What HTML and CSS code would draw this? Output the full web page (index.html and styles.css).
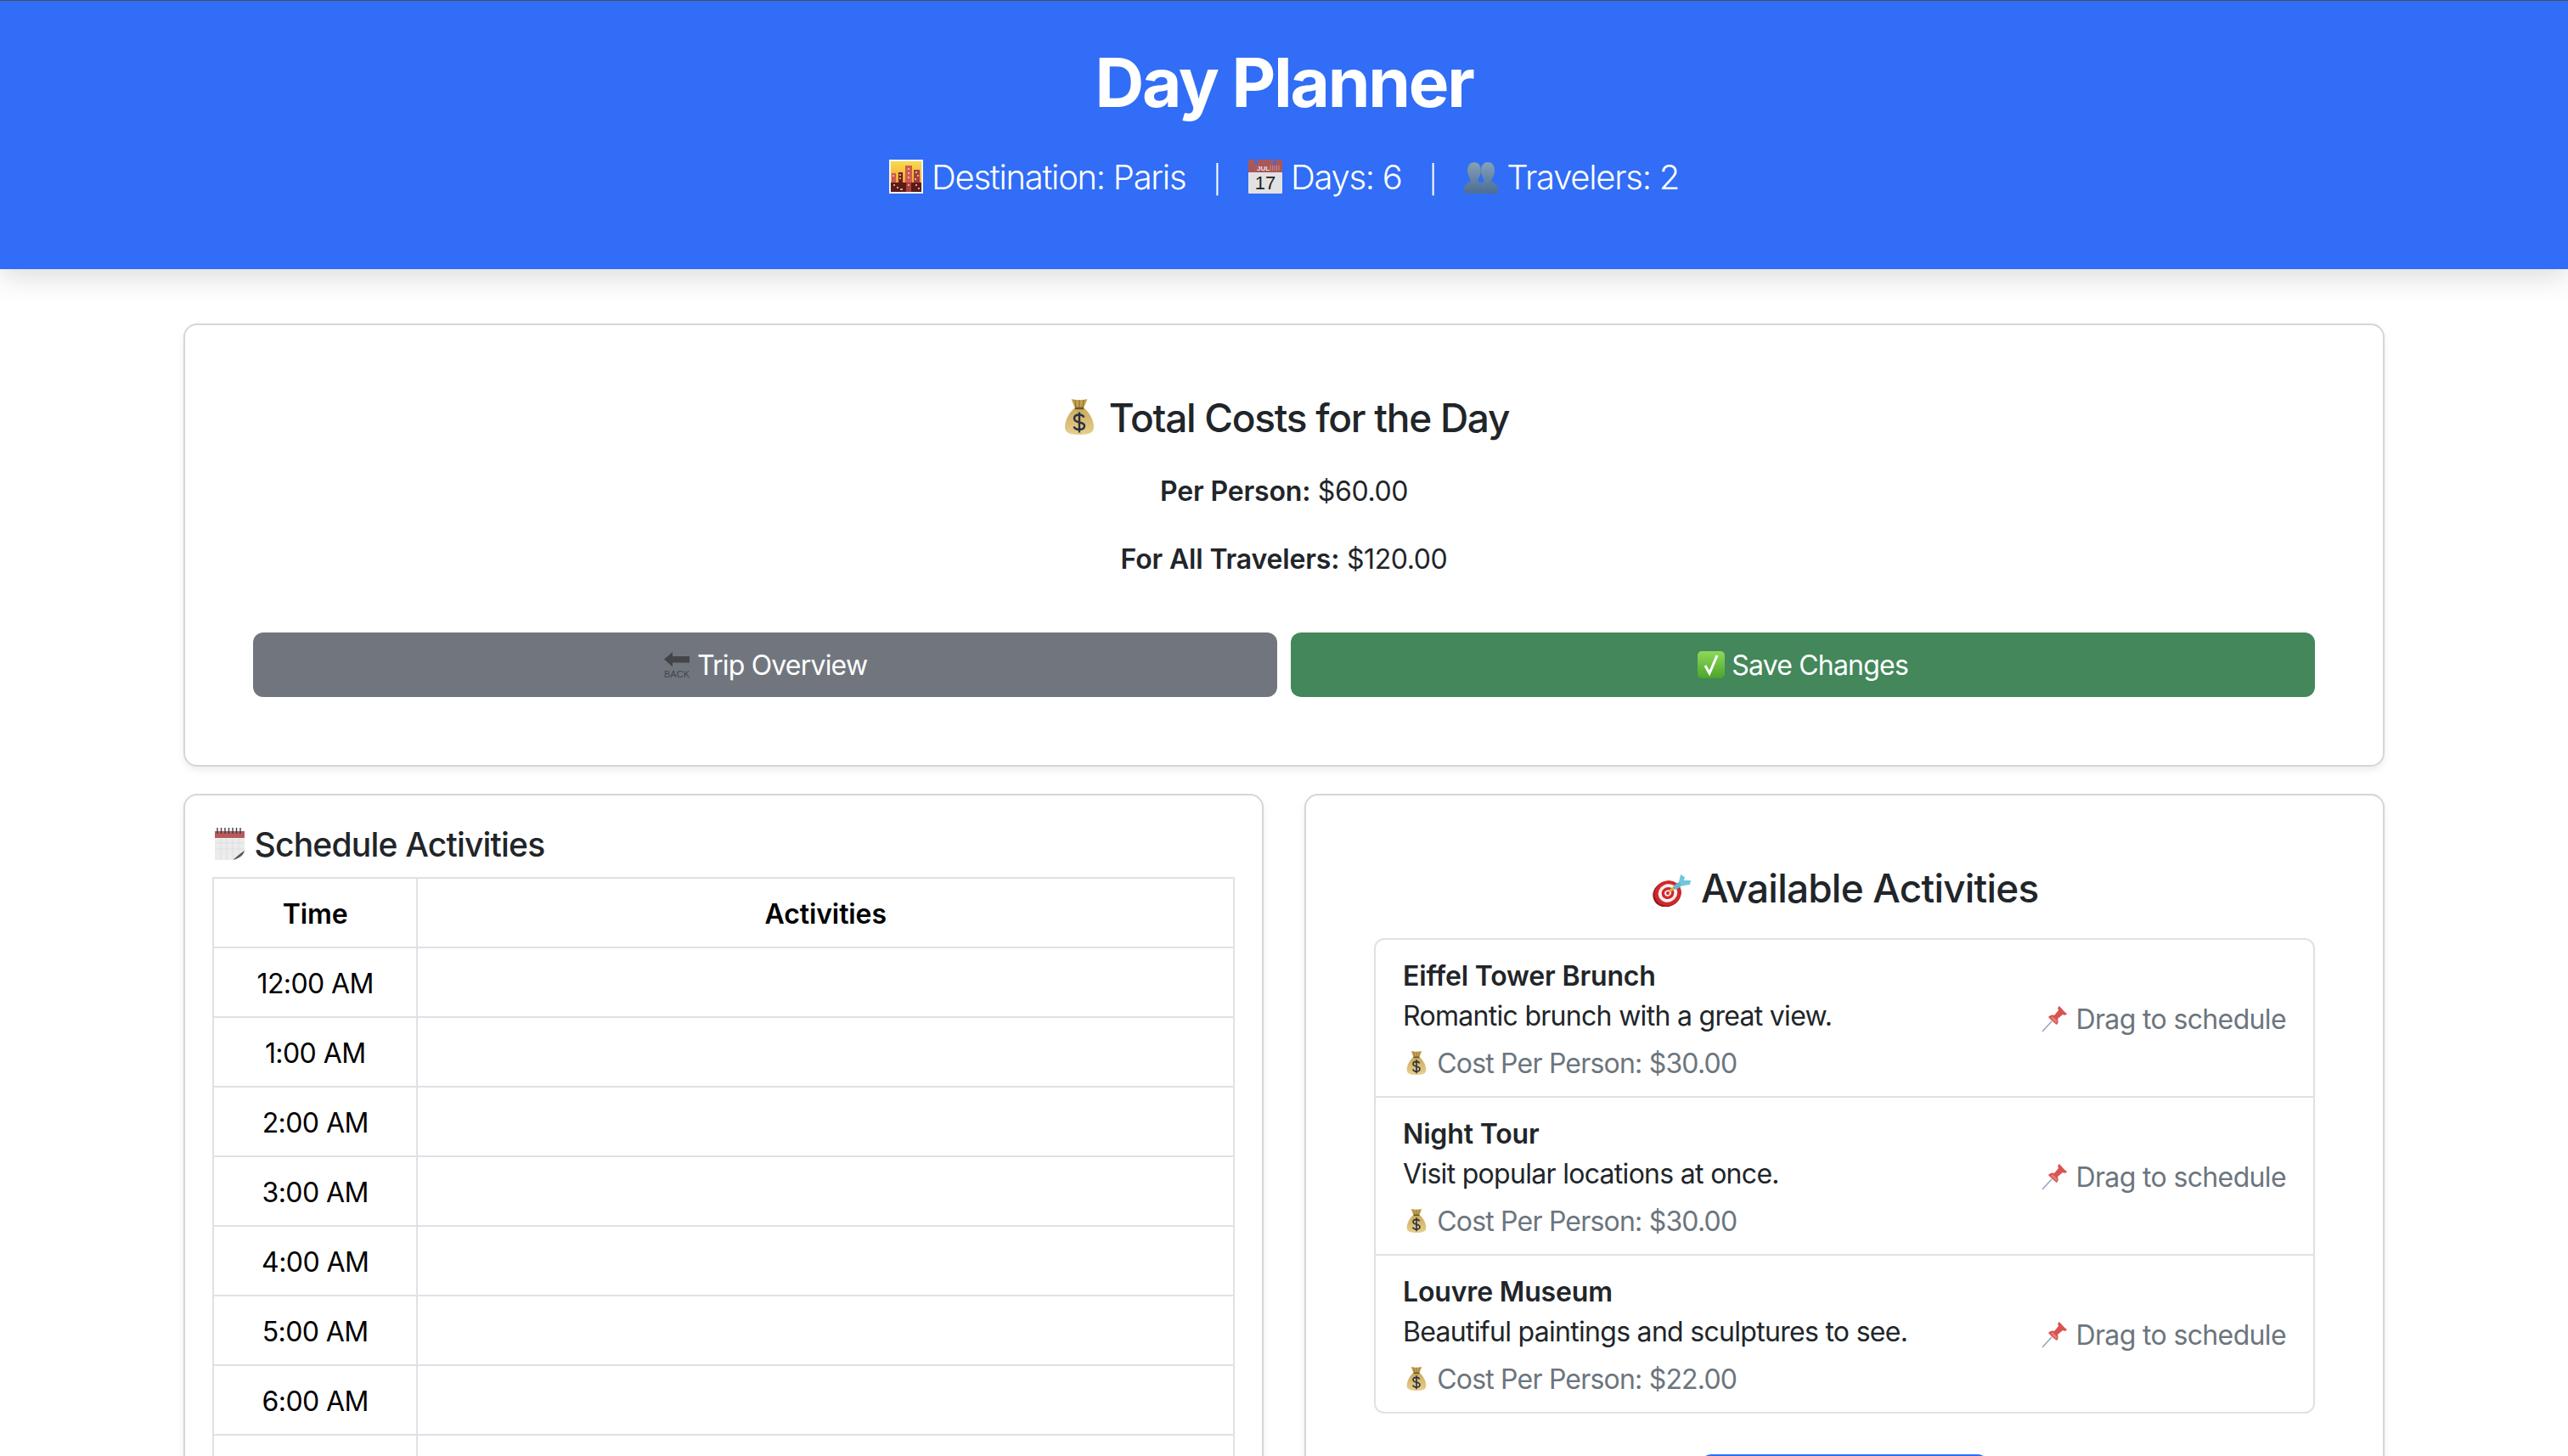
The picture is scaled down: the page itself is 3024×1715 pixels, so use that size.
FILE: index.html
```html
<!DOCTYPE html>
<html lang="en">
<head>
  <meta charset="UTF-8">
  <meta name="viewport" content="width=device-width, initial-scale=1.0">
  <title>Day Planner</title>
  <link rel="stylesheet" href="styles.css">
</head>
<body>
  <svg class="sprites" aria-hidden="true">
    <defs>
      <linearGradient id="bagGrad" x1="0" y1="0" x2="0" y2="1">
        <stop offset="0" stop-color="#c9a95c"/>
        <stop offset="1" stop-color="#e8cf8e"/>
      </linearGradient>
      <linearGradient id="skyGrad" x1="0" y1="0" x2="0" y2="1">
        <stop offset="0" stop-color="#f9dc4c"/>
        <stop offset="1" stop-color="#ee8a2e"/>
      </linearGradient>
      <linearGradient id="boxGrad" x1="0" y1="0" x2="0" y2="1">
        <stop offset="0" stop-color="#8fd85a"/>
        <stop offset="1" stop-color="#4aa52a"/>
      </linearGradient>
      <linearGradient id="peopleGrad" x1="0" y1="0" x2="0" y2="1">
        <stop offset="0" stop-color="#85a3b8"/>
        <stop offset="1" stop-color="#4a6c94"/>
      </linearGradient>
    </defs>
    <symbol id="i-bag" viewBox="0 0 48 48">
      <path d="M15 3c4 1.500 14 1.500 18 0 1 0-3 8-4 11H19C18 11 14 3 15 3z" fill="#c4a250"/>
      <path d="M19 4l1 9M24 4v9M29 4l-1 9" stroke="#8f7434" stroke-width="1.200" fill="none"/>
      <path d="M19 13h10c6 5 12 14 12 23 0 7-6 9-17 9S7 43 7 36c0-9 6-18 12-23z" fill="url(#bagGrad)"/>
      <path d="M19 14h10" stroke="#6c5522" stroke-width="2.500"/>
      <path d="M29.500 24.500c-1-2-3-3-5.500-3-3.500 0-6 1.700-6 4.500 0 6 12 3 12 8.500 0 2.800-2.500 4.500-6 4.500-3 0-5.500-1.300-6.500-3.500M24 18.500v24" stroke="#2b3140" stroke-width="2.400" fill="none"/>
    </symbol>
    <symbol id="i-city" viewBox="0 0 40 40">
      <rect x="0" y="0" width="40" height="40" fill="#f3f3f3"/>
      <rect x="2" y="2" width="36" height="36" fill="url(#skyGrad)"/>
      <rect x="19" y="7" width="8" height="31" fill="#cf5a50"/>
      <rect x="3" y="16" width="5" height="22" fill="#c9594d"/>
      <rect x="11" y="15" width="5" height="23" fill="#6b1f1e"/>
      <rect x="29" y="12" width="7" height="26" fill="#a53c38"/>
      <rect x="2" y="27" width="36" height="11" fill="#5d1a1a"/>
      <rect x="20" y="27" width="6" height="11" fill="#a8423a"/>
      <path d="M4 19h2M12 18h2M12 22h2M31 15h2M33 19h2M30 23h2M22 11h2M22 16h2M22 21h2M5 30h2M9 33h2M13 35h3M22 30h2M31 30h2M34 34h2" stroke="#f2d9a8" stroke-width="1.300"/>
    </symbol>
    <symbol id="i-people" viewBox="0 0 40 40">
      <path d="M28 3c5 0 8 4 8 10 0 5-3 9-4 12 1 2 8 3 8 10v5H16v-5c0-7 7-8 8-10-1-3-4-7-4-12 0-6 3-10 8-10z" fill="url(#peopleGrad)"/>
      <path d="M12 3c5 0 8 4 8 10 0 5-3 9-4 12 1 2 8 3 8 10v5H0v-5c0-7 7-8 8-10-1-3-4-7-4-12C4 7 7 3 12 3z" fill="url(#peopleGrad)" stroke="#5d7e9e" stroke-width=".6"/>
    </symbol>
    <symbol id="i-check" viewBox="0 0 32 32">
      <rect x="0" y="0" width="32" height="32" rx="5" fill="url(#boxGrad)"/>
      <path d="M9 17l5 9 9-21" stroke="#fff" stroke-width="3" fill="none"/>
    </symbol>
    <symbol id="i-tear" viewBox="0 0 40 40">
      <rect x="3" y="5" width="35" height="34" fill="#ececec"/>
      <path d="M3 19h35M3 26h35M10 12v27M17 12v27M24 12v27M31 12v27" stroke="#dcdcdc" stroke-width=".8"/>
      <rect x="3" y="5" width="35" height="8" fill="#b8595b"/>
      <path d="M6 1v7M10.500 1v7M15 1v7M19.500 1v7M24 1v7M28.500 1v7M33 1v7" stroke="#33404f" stroke-width="1.400"/>
      <path d="M38 28c-3 5-9 9-17 11h17z" fill="#fff"/>
      <path d="M38 28c-1 5-6 9-14 11 7-6 9-8 14-11z" fill="#55595d"/>
    </symbol>
    <symbol id="i-dart" viewBox="0 0 48 40">
      <ellipse cx="19" cy="25" rx="17" ry="15" transform="rotate(-25 19 25)" fill="#8e1b1f"/>
      <ellipse cx="20" cy="24" rx="16" ry="14.500" transform="rotate(-25 20 24)" fill="#d2272c"/>
      <ellipse cx="20" cy="24" rx="11.500" ry="10.500" transform="rotate(-25 20 24)" fill="#f6eeee"/>
      <ellipse cx="20" cy="24" rx="7.500" ry="7" transform="rotate(-25 20 24)" fill="#d2272c"/>
      <ellipse cx="20" cy="24" rx="4" ry="3.500" transform="rotate(-25 20 24)" fill="#f6eeee"/>
      <circle cx="20" cy="24" r="2" fill="#d2272c"/>
      <path d="M22 22l6-5" stroke="#d9b23c" stroke-width="3"/>
      <path d="M26 17c3-4 6-6 9-7l2 4c-2 3-5 5-9 6z" fill="#62b8cf"/>
      <path d="M33 11l2-9 5 3-1 4 8 0-1 5-7 1-2 1z" fill="#73c6da"/>
    </symbol>
    <symbol id="i-pin" viewBox="0 0 32 32">
      <path d="M1 31l11-12" stroke="#8fa4b8" stroke-width="1.400"/>
      <path d="M21 1c-2 1-2 3-1 5l-5 6c-3-1-5 0-7 2 3 3 7 7 10 9 2-2 2-4 1-7l6-5c2 1 4 1 5-1-3-2-6-6-9-9z" fill="#d9534f"/>
      <path d="M11 15c2 2 4 4 6 6l2-2-6-6z" fill="#ea7a74"/>
    </symbol>
  </svg>

  <header class="page-header">
    <h1>Day Planner</h1>
    <p class="trip-info">
      <svg class="emoji"><use href="#i-city"/></svg> Destination: Paris &nbsp;<span class="sep">|</span>&nbsp;
      <svg class="emoji" viewBox="0 0 40 40">
        <rect x="0" y="0" width="40" height="40" rx="1" fill="#e2e2e2"/>
        <rect x="0" y="0" width="40" height="15" fill="#a9585a"/>
        <circle cx="9" cy="3.500" r="2.200" fill="#316df6"/>
        <circle cx="31" cy="3.500" r="2.200" fill="#316df6"/>
        <path d="M26 7v6M28.500 7v6M31 7v6M33.500 7v6M36 7v6" stroke="#c08b8b" stroke-width="1"/>
        <text x="10" y="13" class="cal-month">JUL</text>
        <text x="20" y="35" class="cal-day">17</text>
      </svg> Days: 6 &nbsp;<span class="sep">|</span>&nbsp;
      <svg class="emoji"><use href="#i-people"/></svg> Travelers: 2
    </p>
  </header>

  <main class="container">
    <section class="card costs-card">
      <h4><svg class="emoji emoji-lg"><use href="#i-bag"/></svg> Total Costs for the Day</h4>
      <p><strong>Per Person:</strong> $60.00</p>
      <p><strong>For All Travelers:</strong> $120.00</p>
      <div class="button-row">
        <button class="btn btn-gray">
          <svg class="emoji emoji-sm" viewBox="0 0 32 32">
            <path d="M1 9.500L11 1v5h20v7.500H11v5z" fill="#434548"/>
            <text x="16" y="30.500" class="back-word">BACK</text>
          </svg> Trip Overview
        </button>
        <button class="btn btn-green"><svg class="emoji emoji-sm"><use href="#i-check"/></svg> Save Changes</button>
      </div>
    </section>

    <div class="planner-row">
      <section class="card schedule-card">
        <h5><svg class="emoji"><use href="#i-tear"/></svg> Schedule Activities</h5>
        <table class="schedule">
          <thead>
            <tr><th class="time-col">Time</th><th>Activities</th></tr>
          </thead>
          <tbody>
            <tr><td>12:00 AM</td><td></td></tr>
            <tr><td>1:00 AM</td><td></td></tr>
            <tr><td>2:00 AM</td><td></td></tr>
            <tr><td>3:00 AM</td><td></td></tr>
            <tr><td>4:00 AM</td><td></td></tr>
            <tr><td>5:00 AM</td><td></td></tr>
            <tr><td>6:00 AM</td><td></td></tr>
            <tr><td></td><td></td></tr>
          </tbody>
        </table>
      </section>

      <section class="card activities-card">
        <h3><svg class="emoji emoji-dart"><use href="#i-dart"/></svg> Available Activities</h3>
        <ul class="activity-list">
          <li class="activity">
            <div>
              <strong>Eiffel Tower Brunch</strong>
              <p class="desc">Romantic brunch with a great view.</p>
              <p class="muted"><svg class="emoji emoji-sm"><use href="#i-bag"/></svg> Cost Per Person: $30.00</p>
            </div>
            <span class="muted drag"><svg class="emoji emoji-sm"><use href="#i-pin"/></svg> Drag to schedule</span>
          </li>
          <li class="activity">
            <div>
              <strong>Night Tour</strong>
              <p class="desc">Visit popular locations at once.</p>
              <p class="muted"><svg class="emoji emoji-sm"><use href="#i-bag"/></svg> Cost Per Person: $30.00</p>
            </div>
            <span class="muted drag"><svg class="emoji emoji-sm"><use href="#i-pin"/></svg> Drag to schedule</span>
          </li>
          <li class="activity">
            <div>
              <strong>Louvre Museum</strong>
              <p class="desc">Beautiful paintings and sculptures to see.</p>
              <p class="muted"><svg class="emoji emoji-sm"><use href="#i-bag"/></svg> Cost Per Person: $22.00</p>
            </div>
            <span class="muted drag"><svg class="emoji emoji-sm"><use href="#i-pin"/></svg> Drag to schedule</span>
          </li>
        </ul>
        <button class="add-btn" aria-label="Add"></button>
      </section>
    </div>
  </main>
</body>
</html>
```

FILE: styles.css
```css
html, body {
  height: 100%;
  overflow: hidden;
}

body {
  margin: 0;
  background: #fff;
  color: #212529;
  font-family: Inter, "Noto Sans", "Liberation Sans", sans-serif;
  font-size: 32px;
  line-height: 48px;
  letter-spacing: -0.025em;
}

/* hidden holder for the icon symbols, display:none would break the gradients */
.sprites {
  display: block;
  width: 0;
  height: 0;
}

.emoji {
  width: 40px;
  height: 40px;
  vertical-align: -5px;
}

.emoji-lg {
  width: 48px;
  height: 48px;
  vertical-align: -6px;
}

.emoji-sm {
  width: 32px;
  height: 32px;
  vertical-align: -4px;
}

.emoji-dart {
  width: 48px;
  height: 40px;
}

.cal-month {
  font: 700 8px "Liberation Sans", sans-serif;
  letter-spacing: 0;
  fill: #efe3e3;
}

.cal-day {
  font: 400 22px "Liberation Sans", sans-serif;
  letter-spacing: 0;
  fill: #222;
  text-anchor: middle;
}

.back-word {
  font: 400 11px "Liberation Sans", sans-serif;
  letter-spacing: 0;
  fill: #434548;
  text-anchor: middle;
}

.page-header {
  border-top: 1px solid #4a4f57;
  background: #316df6;
  color: #fff;
  text-align: center;
  padding: 48px 48px 48px;
  box-shadow: 0 8px 32px rgba(0, 0, 0, 0.15);
}

.page-header h1 {
  margin: 0 0 34px;
  font-size: 80px;
  line-height: 96px;
  font-weight: 700;
  letter-spacing: -0.028em;
}

.trip-info {
  margin: 0 0 30px;
  font-size: 40px;
  line-height: 60px;
  font-weight: 300;
  letter-spacing: -0.032em;
}

.sep {
  font-size: 32px;
  line-height: 1;
  margin: 0 13px 0 12px;
}

.container {
  width: 2592px;
  margin: 64px auto 0;
}

.card {
  background: #fff;
  border: 2px solid #d6d6d6;
  border-radius: 16px;
  box-shadow: 0 4px 8px rgba(0, 0, 0, 0.075);
}

.card h3, .card h4 {
  margin: 0;
  font-size: 46px;
  line-height: 58px;
  font-weight: 500;
}

.card h5 {
  margin: 0 0 14px;
  padding-top: 2px;
  font-size: 39px;
  line-height: 48px;
  font-weight: 500;
}

.costs-card {
  padding: 80px;
  text-align: center;
}

.costs-card h4 {
  margin-bottom: 34px;
  letter-spacing: -0.0275em;
}

.costs-card p {
  margin: 0 0 32px;
  letter-spacing: -0.012em;
}

strong {
  font-weight: 600;
  letter-spacing: -0.005em;
}

.button-row {
  display: flex;
  gap: 16px;
  margin-top: 62px;
}

.btn {
  flex: 1;
  height: 76px;
  border: 0;
  padding: 2px 0 0;
  border-radius: 12px;
  color: #fff;
  font: inherit;
  letter-spacing: inherit;
}

.btn-gray {
  background: #71767e;
}

.btn-green {
  background: #43875b;
}

.planner-row {
  display: grid;
  grid-template-columns: 1fr 1fr;
  gap: 48px;
  margin-top: 32px;
}

.schedule-card {
  padding: 32px;
}

.schedule {
  width: 100%;
  border-collapse: collapse;
  color: #000;
  letter-spacing: -0.018em;
}

.schedule th, .schedule td {
  border: 2px solid #dee2e6;
  height: 82px;
  padding: 18px 16px 14px;
  text-align: center;
  box-sizing: border-box;
}

.schedule th {
  font-weight: 600;
  letter-spacing: -0.003em;
}

.time-col {
  width: 20%;
}

.activities-card {
  padding: 80px;
}

.activities-card h3 {
  margin-bottom: 30px;
  text-align: center;
}

.activity-list {
  list-style: none;
  margin: 0;
  padding: 0;
  border: 2px solid #dee2e6;
  border-radius: 12px;
}

.activity {
  display: flex;
  justify-content: space-between;
  align-items: center;
  padding: 18px 32px 14px;
}

.activity + .activity {
  border-top: 2px solid #dee2e6;
}

.activity strong {
  display: block;
  margin-top: 2px;
  line-height: 46px;
}

.activity p {
  margin: 0;
}

.activity .desc {
  margin-bottom: 8px;
  letter-spacing: -0.022em;
}

.muted {
  color: #6c757d;
}

.drag {
  letter-spacing: -0.02em;
}

.add-btn {
  display: block;
  width: 338px;
  height: 76px;
  margin: 48px auto 0;
  border: 0;
  border-radius: 12px;
  background: #316df6;
}
```
